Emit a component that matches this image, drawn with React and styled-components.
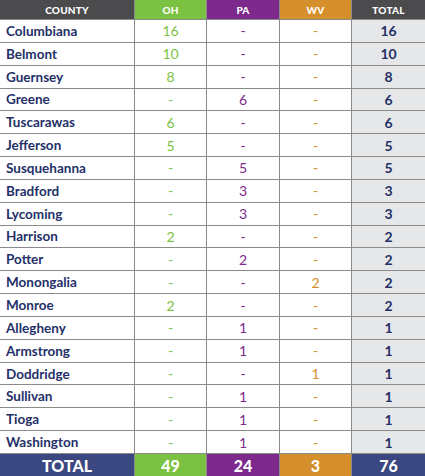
import React from "react";
import styled, { createGlobalStyle } from "styled-components";

const GlobalStyle = createGlobalStyle`
  html, body { margin: 0; padding: 0; background: #fff; }
  body { font-family: "Lato", "DejaVu Sans", sans-serif; }
`;

const ROWS = [
  ["Columbiana", "16", "-", "-", "16"],
  ["Belmont", "10", "-", "-", "10"],
  ["Guernsey", "8", "-", "-", "8"],
  ["Greene", "-", "6", "-", "6"],
  ["Tuscarawas", "6", "-", "-", "6"],
  ["Jefferson", "5", "-", "-", "5"],
  ["Susquehanna", "-", "5", "-", "5"],
  ["Bradford", "-", "3", "-", "3"],
  ["Lycoming", "-", "3", "-", "3"],
  ["Harrison", "2", "-", "-", "2"],
  ["Potter", "-", "2", "-", "2"],
  ["Monongalia", "-", "-", "2", "2"],
  ["Monroe", "2", "-", "-", "2"],
  ["Allegheny", "-", "1", "-", "1"],
  ["Armstrong", "-", "1", "-", "1"],
  ["Doddridge", "-", "-", "1", "1"],
  ["Sullivan", "-", "1", "-", "1"],
  ["Tioga", "-", "1", "-", "1"],
  ["Washington", "-", "1", "-", "1"],
];

const COLORS = {
  county: "#4b4b4d",
  oh: "#7cc242",
  pa: "#7d2a8c",
  wv: "#d58f2c",
  total: "#4b4b4d",
  navy: "#243068",
  navyBg: "#3a4781",
};

const Table = styled.div`
  display: grid;
  grid-template-columns: 134px 71px 72px 71px 73px;
  grid-template-rows: 19px repeat(19, 1fr) 22px;
  width: 425px;
  height: 476px;
  background: #8a8a8a;
  gap: 1px;
  box-sizing: border-box;
`;

const Head = styled.div`
  background: ${(p) => p.$bg};
  color: #fff;
  font-weight: 900;
  font-size: 10px;
  display: flex;
  align-items: center;
  justify-content: center;
  letter-spacing: 0.2px;
`;

const Name = styled.div`
  background: #fff;
  color: ${COLORS.navy};
  font-weight: 700;
  font-size: 13.5px;
  display: flex;
  align-items: center;
  padding-left: 6px;
`;

const Num = styled.div`
  background: #fff;
  color: ${(p) => p.$color};
  font-weight: 400;
  font-size: 14px;
  display: flex;
  align-items: center;
  justify-content: center;
`;

const Total = styled.div`
  background: #e6e7e9;
  color: ${COLORS.navy};
  font-weight: 700;
  font-size: 14px;
  display: flex;
  align-items: center;
  justify-content: center;
`;

const Foot = styled.div`
  background: ${(p) => p.$bg};
  color: #fff;
  font-weight: 900;
  font-size: 16px;
  display: flex;
  align-items: center;
  justify-content: center;
`;

export default function App() {
  return (
    <>
      <GlobalStyle />
      <Table>
        <Head $bg={COLORS.county}>COUNTY</Head>
        <Head $bg={COLORS.oh}>OH</Head>
        <Head $bg={COLORS.pa}>PA</Head>
        <Head $bg={COLORS.wv}>WV</Head>
        <Head $bg={COLORS.total}>TOTAL</Head>
        {ROWS.map(([name, oh, pa, wv, tot]) => (
          <React.Fragment key={name}>
            <Name>{name}</Name>
            <Num $color={COLORS.oh}>{oh}</Num>
            <Num $color={COLORS.pa}>{pa}</Num>
            <Num $color={COLORS.wv}>{wv}</Num>
            <Total>{tot}</Total>
          </React.Fragment>
        ))}
        <Foot $bg={COLORS.navyBg}>TOTAL</Foot>
        <Foot $bg={COLORS.oh}>49</Foot>
        <Foot $bg={COLORS.pa}>24</Foot>
        <Foot $bg={COLORS.wv}>3</Foot>
        <Foot $bg={COLORS.navyBg}>76</Foot>
      </Table>
    </>
  );
}
